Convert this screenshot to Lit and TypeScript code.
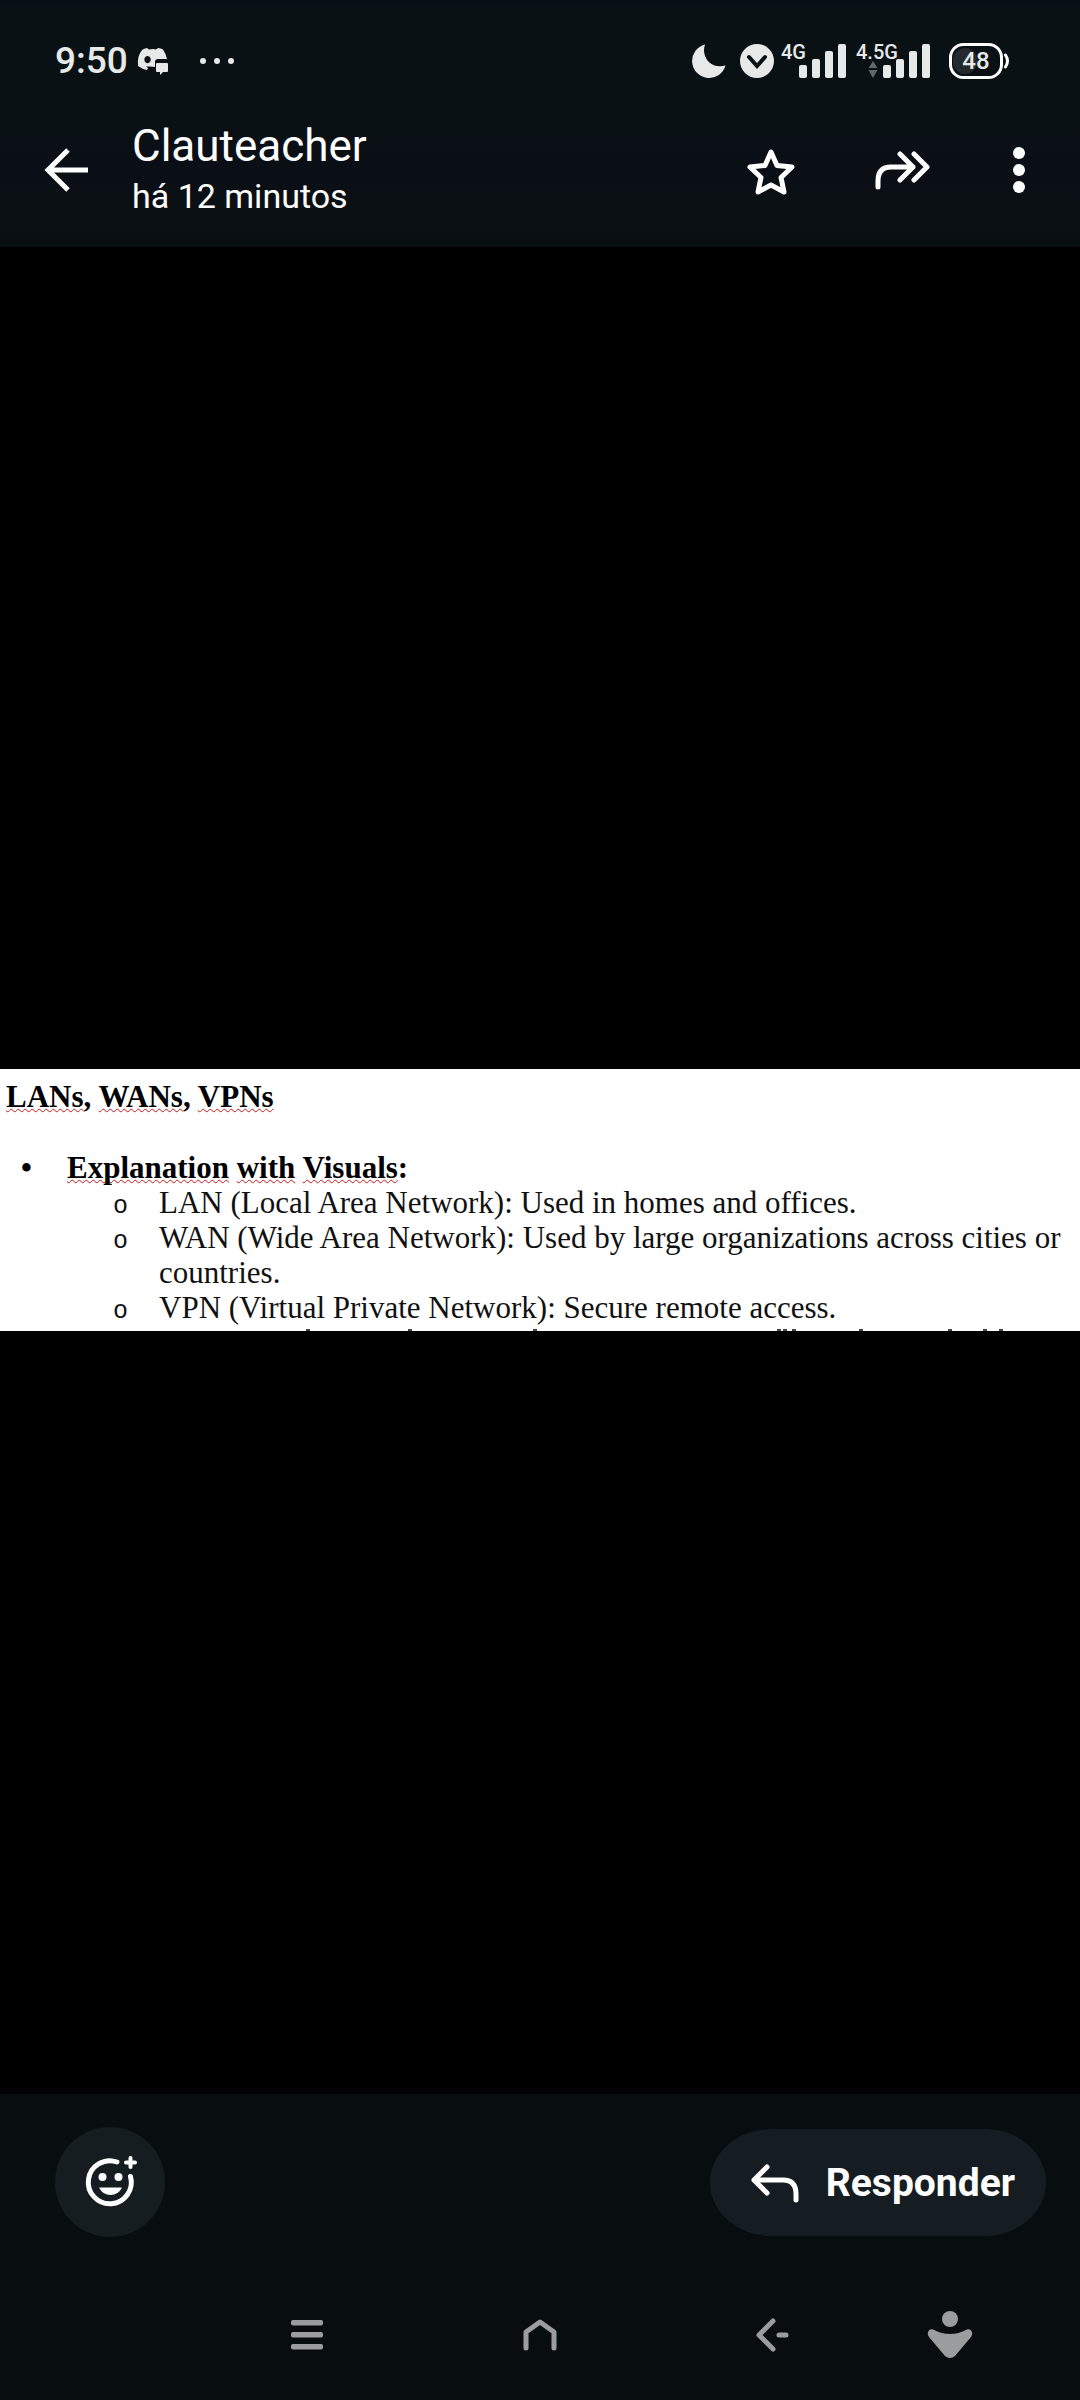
import { LitElement, html, css } from "lit";
import { customElement } from "lit/decorators.js";

const bars = html`<svg class="bars" viewBox="0 0 47 34" width="47" height="34" aria-hidden="true">
  <rect x="0" y="21" width="8" height="13" rx="2"></rect>
  <rect x="13" y="15" width="8" height="19" rx="2"></rect>
  <rect x="26" y="7" width="8" height="27" rx="2"></rect>
  <rect x="39" y="0" width="8" height="34" rx="2"></rect>
</svg>`;

@customElement("status-bar")
class StatusBar extends LitElement {
  static styles = css`
    :host { display: block; color: #e6e9e8; font-family: Roboto, sans-serif; }
    .bar { display: flex; align-items: center; justify-content: space-between; height: 122px; padding: 0 69px 0 55px; }
    .side { display: flex; align-items: center; }
    svg { display: block; fill: currentColor; }
    .time { font-size: 37px; line-height: 44px; font-weight: 500; margin-right: 9px; }
    .chat { margin-right: 30px; }
    .moon { margin-right: 14px; }
    .vpn { margin-right: 7px; }
    .signal { position: relative; display: flex; justify-content: flex-end; width: 65px; margin-right: 10px; }
    .signal.wide { width: 74px; margin-right: 19px; }
    .tag { position: absolute; left: 0; top: -3px; font-size: 20px; line-height: 22px; font-weight: 500; }
    .data { position: absolute; left: 12px; top: 17px; fill: #61676a; }
    .battery { position: relative; display: flex; }
    .level { position: absolute; left: 0; top: 0; width: 54px; text-align: center; font-size: 24px; line-height: 38px; font-weight: 500; }
  `;
  render() {
    return html`<div class="bar">
      <div class="side">
        <span class="time">9:50</span>
        <svg class="chat" viewBox="0 0 32 28" width="32" height="28" aria-hidden="true">
          <path fill-rule="evenodd" d="M10 1 L12 2.500 Q16 1.600 19 2.500 L21 1 Q24 1.200 26 2.600 Q29 7 30 12 H21 Q18 12 18 15 V20 L13 19.500 L9 19.500 L11 21 L10 23 Q5 22 1 19 Q0 9 5 3 Q7 1.400 10 1 Z M10.500 9 a3.200 3.600 0 1 0 0.100 0 Z"></path>
          <path d="M20 16 H30 Q31 16 31 17 V24 Q31 25 30 25 H26 L23 28 V25 H20 Q19 25 19 24 V17 Q19 16 20 16 Z"></path>
        </svg>
        <svg viewBox="0 0 36 8" width="36" height="8" aria-hidden="true">
          <circle cx="4" cy="4" r="3"></circle><circle cx="18" cy="4" r="3"></circle><circle cx="32" cy="4" r="3"></circle>
        </svg>
      </div>
      <div class="side">
        <svg class="moon" viewBox="0 0 34 34" width="34" height="34" aria-hidden="true">
          <path d="M13 0.500 A17 17 0 1 0 33.500 21.500 C24 24 17.500 20 14.500 15 C11.500 10 11.500 5 13 0.500 Z"></path>
        </svg>
        <svg class="vpn" viewBox="0 0 34 34" width="34" height="34" aria-hidden="true">
          <circle cx="17" cy="17" r="17"></circle>
          <path d="M9 13 L17 22 L25 13" fill="none" stroke="#0b1215" stroke-width="4" stroke-linecap="round"></path>
        </svg>
        <div class="signal"><span class="tag">4G</span>${bars}</div>
        <div class="signal wide"><span class="tag">4.5G</span>
          <svg class="data" viewBox="0 0 10 17" width="10" height="17" aria-hidden="true"><path d="M5 0 L9.500 7 H0.500 Z M5 17 L9.500 9 H0.500 Z"></path></svg>
          ${bars}</div>
        <div class="battery">
          <svg viewBox="0 0 62 38" width="62" height="38" aria-hidden="true">
            <rect x="4" y="6" width="24" height="26" rx="12" fill="#25292c"></rect>
            <rect x="1.500" y="2.500" width="51" height="33" rx="13" fill="none" stroke="#fff" stroke-width="3"></rect>
            <path d="M56.500 13 Q60.500 19 56.500 25" fill="none" stroke="#fff" stroke-width="3" stroke-linecap="round"></path>
          </svg>
          <span class="level">48</span>
        </div>
      </div>
    </div>`;
  }
}

@customElement("viewer-header")
class ViewerHeader extends LitElement {
  static styles = css`
    :host { display: block; color: #fff; font-family: Roboto, sans-serif; }
    .bar { display: flex; align-items: center; height: 96px; padding: 0 30px 29px 20px; }
    button { display: flex; align-items: center; justify-content: center; height: 92px; padding: 0; border: 0; background: none; color: inherit; flex: none; }
    svg { display: block; }
    .back { width: 92px; }
    .titles { flex: 1; min-width: 0; padding-left: 20px; }
    .name { margin: 0; font-size: 44px; line-height: 52px; font-weight: 400; }
    .when { margin: 0; font-size: 34px; line-height: 48px; }
    .actions { display: flex; gap: 36px; }
    .star { width: 90px; }
    .forward { width: 100px; }
    .more { width: 62px; }
  `;
  render() {
    return html`<div class="bar">
      <button class="back" aria-label="Voltar">
        <svg viewBox="0 0 44 44" width="44" height="44" fill="none" stroke="currentColor" stroke-width="5"><path d="M44 22 H4 M24 2 L4 22 L24 42"></path></svg>
      </button>
      <div class="titles"><h1 class="name">Clauteacher</h1><p class="when">há 12 minutos</p></div>
      <div class="actions">
        <button class="star" aria-label="Favoritar">
          <svg viewBox="0 -2 50 50" width="50" height="50" fill="none" stroke="currentColor" stroke-width="5" stroke-linejoin="round"><path d="M25 5 L31 18.500 L46 20 L35 30.500 L38 45 L25 38 L12 45 L15 30.500 L4 20 L19 18.500 Z"></path></svg>
        </button>
        <button class="forward" aria-label="Encaminhar">
          <svg viewBox="0 0 56 44" width="56" height="44" fill="none" stroke="currentColor" stroke-width="5" stroke-linecap="round" stroke-linejoin="round"><path d="M4 39 V33 Q4 19 17 19 H39 M26 6 L39 19 L26 32 M40 6 L53 19 L40 32"></path></svg>
        </button>
        <button class="more" aria-label="Mais opções">
          <svg viewBox="0 0 12 46" width="12" height="46" fill="currentColor"><circle cx="6" cy="6" r="6"></circle><circle cx="6" cy="23" r="6"></circle><circle cx="6" cy="40" r="6"></circle></svg>
        </button>
      </div>
    </div>`;
  }
}

@customElement("shared-note")
class SharedNote extends LitElement {
  static styles = css`
    :host { display: block; background: #fff; color: #111; font-family: "Liberation Serif", serif; font-size: 31px; line-height: 35px; }
    .page { padding: 10px 8px 4px 6px; }
    .title { margin: 0; font-size: 31px; line-height: 35px; font-weight: 700; color: #000; }
    .typo { text-decoration: underline wavy #cc1414 1px; text-decoration-skip-ink: none; text-underline-offset: 1px; }
    ul { list-style: none; margin: 0; padding: 0; }
    .topics { margin-top: 36px; }
    .head { display: flex; font-weight: 700; color: #000; }
    .dot { width: 61px; padding-left: 15px; box-sizing: border-box; }
    .point { display: flex; align-items: baseline; padding-left: 107px; }
    .ring { flex: none; width: 46px; font-family: "Liberation Mono", monospace; font-size: 25px; line-height: 20px; }
    .cut { display: block; width: 100%; height: 2px; }
  `;
  render() {
    const points = [
      "LAN (Local Area Network): Used in homes and offices.",
      "WAN (Wide Area Network): Used by large organizations across cities or countries.",
      "VPN (Virtual Private Network): Secure remote access.",
    ];
    // Tips of the next line, which the image crops away.
    const tips = [306, 408, 533, 777, 783, 792, 859, 948, 983, 999];
    return html`<article class="page">
      <h2 class="title"><span class="typo">LANs</span>, <span class="typo">WANs</span>, <span class="typo">VPNs</span></h2>
      <ul class="topics"><li>
        <div class="head"><span class="dot">•</span><span><span class="typo">Explanation</span> <span class="typo">with</span> <span class="typo">Visuals</span>:</span></div>
        <ul>${points.map((p) => html`<li class="point"><span class="ring">o</span><span>${p}</span></li>`)}</ul>
      </li></ul>
    </article>
    <svg class="cut" viewBox="0 0 1080 2" preserveAspectRatio="none" aria-hidden="true">
      <path d=${tips.map((x) => `M${x} 1 h4`).join(" ")} stroke="#444" stroke-width="2"></path>
    </svg>`;
  }
}

@customElement("reply-bar")
class ReplyBar extends LitElement {
  static styles = css`
    :host { display: block; font-family: Roboto, sans-serif; }
    .bar { display: flex; align-items: center; justify-content: space-between; padding: 33px 34px 33px 55px; }
    button { display: flex; align-items: center; border: 0; color: #fff; font-family: inherit; background: #161d22; }
    svg { display: block; }
    .react { justify-content: center; width: 110px; height: 110px; padding: 0; border-radius: 50%; background: #161d20; }
    .reply { gap: 26px; height: 107px; padding: 2px 31px 0 40px; border-radius: 62px / 54px; font-size: 39px; font-weight: 700; }
  `;
  render() {
    return html`<div class="bar">
      <button class="react" aria-label="Reagir">
        <svg viewBox="0 0 60 60" width="60" height="60" fill="none" stroke="#fff" stroke-width="5" stroke-linecap="round">
          <path d="M37 10 A21.500 21.500 0 1 0 50.500 24.500"></path>
          <path d="M50.500 6 V15 M46 10.500 H55" stroke-width="4"></path>
          <circle cx="22.500" cy="25" r="4" fill="#fff" stroke="none"></circle><circle cx="38.500" cy="25" r="4" fill="#fff" stroke="none"></circle>
          <path d="M20 35.500 H41 Q42 35.500 41.500 36.500 Q38 43 30.500 43 Q23 43 19.500 36.500 Q19 35.500 20 35.500 Z" fill="#fff" stroke="none"></path>
        </svg>
      </button>
      <button class="reply">
        <svg viewBox="0 0 50 42" width="50" height="42" fill="none" stroke="#fff" stroke-width="5" stroke-linecap="round" stroke-linejoin="round"><path d="M46 38 V32 Q46 18 33 18 H4 M17 5 L4 18 L17 31"></path></svg>
        Responder
      </button>
    </div>`;
  }
}

@customElement("system-nav")
class SystemNav extends LitElement {
  static styles = css`
    :host { display: block; }
    .bar { display: grid; grid-template-columns: 190fr 233fr 233fr 233fr 121fr 70fr; height: 130px; align-items: center; }
    button { display: flex; justify-content: center; padding: 32px 0; border: 0; background: none; color: #9b9c9e; }
    svg { display: block; }
    button:first-child { grid-column: 2; }
  `;
  render() {
    return html`<nav class="bar" aria-label="Sistema">
      <button aria-label="Recentes"><svg viewBox="0 0 32 32" width="32" height="32" fill="currentColor"><rect x="0" y="1" width="32" height="5.500" rx="2"></rect><rect x="0" y="13" width="32" height="5.500" rx="2"></rect><rect x="0" y="25" width="32" height="5.500" rx="2"></rect></svg></button>
      <button aria-label="Início"><svg viewBox="0 0 34 32" width="34" height="32" fill="none" stroke="currentColor" stroke-width="5" stroke-linecap="round" stroke-linejoin="round"><path d="M3 29 V13 L17 3 L31 13 V29"></path></svg></button>
      <button aria-label="Voltar"><svg viewBox="0 0 34 34" width="34" height="34" fill="none" stroke="currentColor" stroke-width="5" stroke-linecap="round" stroke-linejoin="round"><path d="M17 3 L3 17 L17 31 M23 17 H30"></path></svg></button>
      <button aria-label="Acessibilidade"><svg viewBox="0 0 46 48" width="46" height="48" fill="currentColor"><circle cx="23" cy="8" r="8"></circle><path d="M6 18.500 Q15 23 23 23 Q31 23 40 18.500 C44 17 47 22 44 26 L28 45 Q23 49 18 45 L2 26 C-1 22 2 17 6 18.500 Z"></path></svg></button>
    </nav>`;
  }
}

@customElement("app-root")
class AppRoot extends LitElement {
  static styles = css`
    :host { display: flex; flex-direction: column; min-height: 100vh; background: #000; }
    .top { background: linear-gradient(#080e18 0, #0a1114 8px, #0a1114 50%, #0a0f16 65%, #0b1014 90%, #080f11); }
    .stage { flex: 1; display: flex; flex-direction: column; justify-content: center; padding-top: 59px; }
    .bottom { background: #080e10; }
  `;
  render() {
    return html`
      <header class="top"><status-bar></status-bar><viewer-header></viewer-header></header>
      <main class="stage"><shared-note></shared-note></main>
      <footer class="bottom"><reply-bar></reply-bar><system-nav></system-nav></footer>
    `;
  }
}
